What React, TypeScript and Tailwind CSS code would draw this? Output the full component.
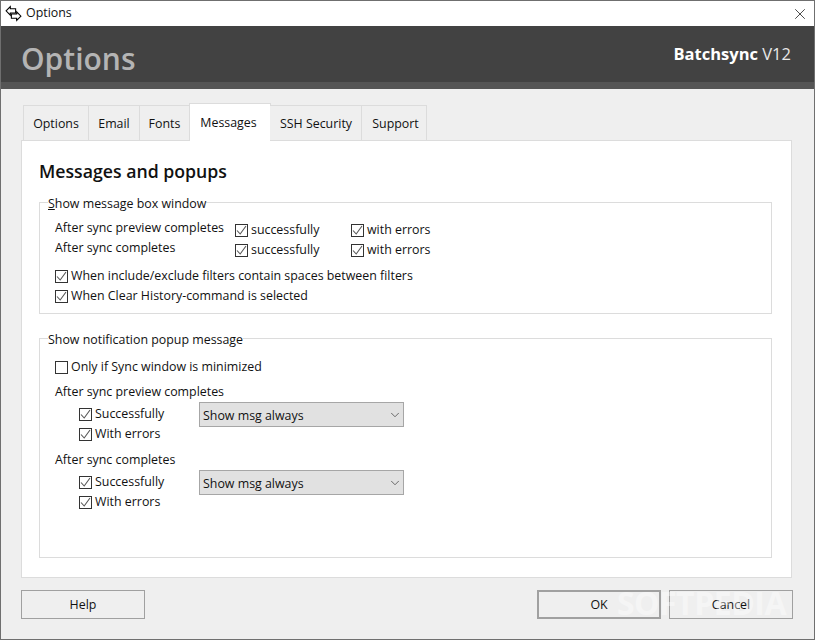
import React, { type ReactNode } from "react";
import { ChevronDown, X } from "lucide-react";

const tabs = ["Options", "Email", "Fonts", "Messages", "SSH Security", "Support"];
const tabWidths = ["w-[66px]", "w-[51px]", "w-[50px]", "w-[82px] pr-[3px]", "w-[92px] pl-[1px]", "w-[65px] pl-[3px]"];

function AppIcon() {
  return (
    <svg width="17" height="17" viewBox="0 0 16 16" fill="#fff" stroke="#000" strokeWidth="1">
      <path d="M1 5.5 5 1.5V3.5H10V7.5H5V9.5Z" />
      <path d="M15 10.5 11 14.5V12.5H6V8.5H11V6.5Z" />
    </svg>
  );
}

function Check({ checked = true, label, className = "" }: { checked?: boolean; label: string; className?: string }) {
  return (
    <div className={`flex h-5 items-center ${className}`}>
      <span className="flex h-[13px] w-[13px] shrink-0 items-center justify-center border border-[#333] bg-white">
        {checked && (
          <svg width="11" height="11" viewBox="0 0 11 11" fill="none" stroke="#555" strokeWidth="1.1">
            <path d="M1 5.5 4.2 9 10 1" />
          </svg>
        )}
      </span>
      <span className="ml-[3px] whitespace-nowrap">{label}</span>
    </div>
  );
}

function Group({ title, className, children }: { title: ReactNode; className: string; children: ReactNode }) {
  return (
    <fieldset className={`border border-[#dcdcdc] ${className}`}>
      <legend className="ml-[-7px] pt-[4px] leading-[16px]">{title}</legend>
      {children}
    </fieldset>
  );
}

function Dropdown() {
  return (
    <div className="-mt-[2px] flex h-[25px] w-[205px] items-center justify-between border border-[#a6a6a6] bg-[#e1e1e1] pl-[3px] pr-[1px]">
      <span className="pt-[3px]">Show msg always</span>
      <ChevronDown size={14} strokeWidth={1.3} color="#444" />
    </div>
  );
}

function Button({ label, className = "" }: { label: string; className?: string }) {
  return (
    <div className={`flex h-[29px] w-[124px] items-center justify-center border border-[#a0a0a0] pt-[2px] ${className}`}>
      {label}
    </div>
  );
}

export default function App() {
  return (
    <div className="flex h-[640px] w-[815px] flex-col overflow-hidden border border-[#6f6f6f] bg-[#efefef] font-['Open_Sans','Noto_Sans',sans-serif] text-[12.4px] text-[#111]">
      <div className="flex h-[25px] shrink-0 items-center bg-white pl-[4px] pr-[5px]">
        <AppIcon />
        <span className="ml-[4px]">Options</span>
        <X size={18} strokeWidth={1} color="#111" className="ml-auto" />
      </div>

      <div className="flex h-[56px] shrink-0 items-center justify-between bg-[#424242] pl-[20px] pr-[23px]">
        <span className="mt-[9px] text-[30px] font-semibold leading-none text-[#b4b4b4]">Options</span>
        <span className="mb-[-1px] text-[16.5px] text-[#e8e8e8]">
          <span className="font-bold text-white">Batchsync</span> V12
        </span>
      </div>
      <div className="h-[7px] shrink-0 bg-[#555555]" />

      <div className="flex flex-1 flex-col px-[20px] pt-[14px]">
        <div className="z-10 ml-[2px] flex h-[38px] items-end">
          {tabs.map((tab, i) => {
            const active = tab === "Messages";
            return (
              <div
                key={tab}
                className={`flex items-center justify-center border border-[#dcdcdc] ${tabWidths[i]} ${
                  i > 0 && !active ? "border-l-0" : ""
                } ${active ? "-ml-px -mr-px h-[38px] border-b-0 bg-white pt-[1px]" : "h-[36px] bg-[#efefef] pt-[3px]"}`}
              >
                {tab}
              </div>
            );
          })}
        </div>

        <div className="-mt-px h-[438px] w-[771px] border border-[#dcdcdc] bg-white pl-[17px] pr-[19px]">
          <h1 className="mt-[18px] text-[17.7px] font-semibold leading-[24px]">Messages and popups</h1>

          <Group
            title={
              <>
                <span className="underline">S</span>how message box window
              </>
            }
            className="mt-[9px] h-[122px] pl-[15px]"
          >
            <div className="mt-[6px] flex">
              <div className="w-[180px] leading-[20px]">
                <div>After sync preview completes</div>
                <div>After sync completes</div>
              </div>
              <div className="mt-[2px] w-[116px]">
                <Check label="successfully" />
                <Check label="successfully" />
              </div>
              <div className="mt-[2px]">
                <Check label="with errors" />
                <Check label="with errors" />
              </div>
            </div>
            <Check label="When include/exclude filters contain spaces between filters" className="mt-[6px]" />
            <Check label="When Clear History-command is selected" />
          </Group>

          <Group title="Show notification popup message" className="mt-[14px] h-[230px] pl-[15px]">
            <Check checked={false} label="Only if Sync window is minimized" className="mt-[9px]" />

            <div className="mt-[5px] leading-[20px]">After sync preview completes</div>
            <div className="mt-[2px] flex items-start pl-[24px]">
              <div className="w-[120px]">
                <Check label="Successfully" />
                <Check label="With errors" />
              </div>
              <Dropdown />
            </div>

            <div className="mt-[6px] leading-[20px]">After sync completes</div>
            <div className="mt-[2px] flex items-start pl-[24px]">
              <div className="w-[120px]">
                <Check label="Successfully" />
                <Check label="With errors" />
              </div>
              <Dropdown />
            </div>
          </Group>
        </div>

        <div className="relative mt-[12px] flex">
          <Button label="Help" />
          <Button label="OK" className="ml-auto border-2" />
          <Button label="Cancel" className="ml-[8px] mr-[1px]" />
          <span className="absolute right-[8px] top-[-11px] text-[32px] font-bold tracking-[-0.5px] text-white/40">
            SOFTPEDIA
          </span>
        </div>
      </div>
    </div>
  );
}
